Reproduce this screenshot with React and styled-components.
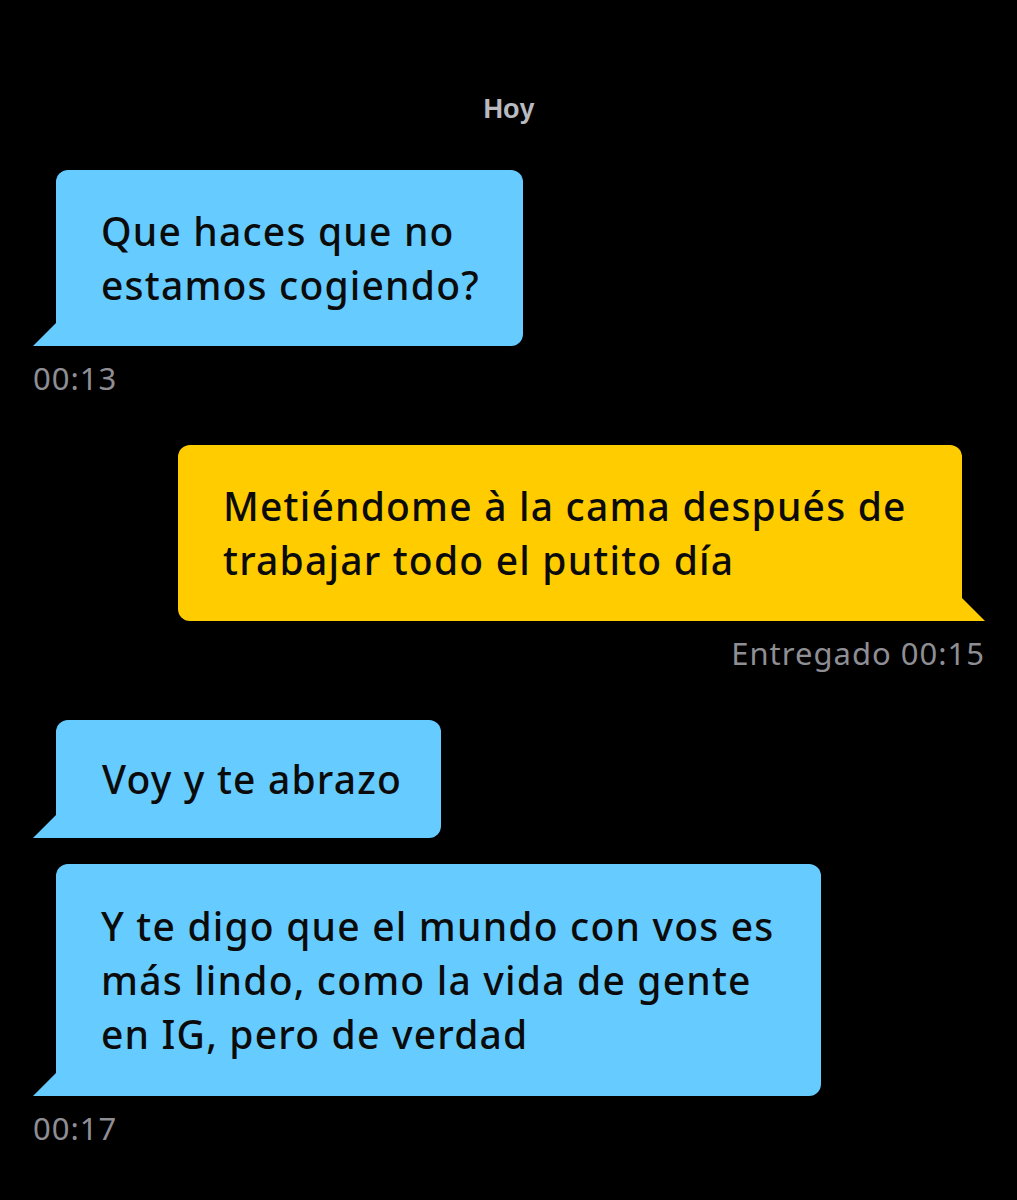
import React from 'react'
import styled, { createGlobalStyle } from 'styled-components'

const GlobalStyle = createGlobalStyle`
  html, body {
    margin: 0;
    padding: 0;
    background: #000;
  }
`

const messages = [
  { id: 1, side: 'in', width: 467, lines: ['Que haces que no', 'estamos cogiendo?'], time: '00:13' },
  { id: 2, side: 'out', width: 784, lines: ['Metiéndome à la cama después de', 'trabajar todo el putito día'], time: 'Entregado 00:15' },
  { id: 3, side: 'in', width: 385, lines: ['Voy y te abrazo'], grouped: true },
  { id: 4, side: 'in', width: 765, lines: ['Y te digo que el mundo con vos es', 'más lindo, como la vida de gente', 'en IG, pero de verdad'], time: '00:17', tall: true },
]

const Chat = () => {
  return (
    <Screen>
      <GlobalStyle />
      <DayLabel>Hoy</DayLabel>
      {messages.map(m => (
        <Group key={m.id} $side={m.side} $tight={m.grouped}>
          <Bubble $side={m.side} $width={m.width} $single={m.lines.length === 1} $tall={m.tall}>
            {m.lines.map((l, i) => (
              <React.Fragment key={i}>
                {l}
                {i < m.lines.length - 1 && <br />}
              </React.Fragment>
            ))}
          </Bubble>
          {m.time && <Meta $side={m.side}>{m.time}</Meta>}
        </Group>
      ))}
    </Screen>
  )
}

//Styled components
const Screen = styled.div`
  width: 1017px;
  min-height: 1200px;
  box-sizing: border-box;
  background: #000;
  padding: 92px 32px 0 33px;
  display: flex;
  flex-direction: column;
`

const DayLabel = styled.div`
  font-family: "Liberation Sans", Arial, sans-serif;
  font-weight: 700;
  font-size: 27px;
  line-height: 34px;
  color: #b9b9c0;
  text-align: center;
  margin-bottom: 44px;
`

const Group = styled.div`
  display: flex;
  flex-direction: column;
  align-items: ${p => (p.$side === 'out' ? 'flex-end' : 'flex-start')};
  margin-bottom: ${p => (p.$tight ? '26px' : '49px')};
`

const Bubble = styled.div`
  position: relative;
  box-sizing: border-box;
  width: ${p => p.$width}px;
  margin-left: ${p => (p.$side === 'out' ? '0' : '23px')};
  margin-right: ${p => (p.$side === 'out' ? '23px' : '0')};
  padding: ${p => (p.$single ? '32px 20px 32px 46px' : p.$tall ? '35px 20px 35px 45px' : '34px 20px 34px 45px')};
  background: ${p => (p.$side === 'out' ? '#ffcc00' : '#66ccff')};
  color: #0b0b0b;
  border-radius: ${p => (p.$side === 'out' ? '12px 12px 0 12px' : '12px 12px 12px 0')};
  font-family: "Noto Sans", "Open Sans", sans-serif;
  font-weight: 500;
  font-size: 39px;
  letter-spacing: 1.2px;
  line-height: 54px;
  white-space: nowrap;

  &::before {
    content: '';
    position: absolute;
    bottom: 0;
    width: 23px;
    height: 23px;
    background: inherit;
    ${p =>
      p.$side === 'out'
        ? 'right: -23px; clip-path: polygon(0 0, 100% 100%, 0 100%);'
        : 'left: -23px; clip-path: polygon(100% 0, 100% 100%, 0 100%);'}
  }
`

const Meta = styled.div`
  margin-top: 14px;
  font-family: "Noto Sans", "Open Sans", sans-serif;
  font-size: 31px;
  letter-spacing: 1px;
  line-height: 36px;
  color: #8e8e94;
`

export default Chat
